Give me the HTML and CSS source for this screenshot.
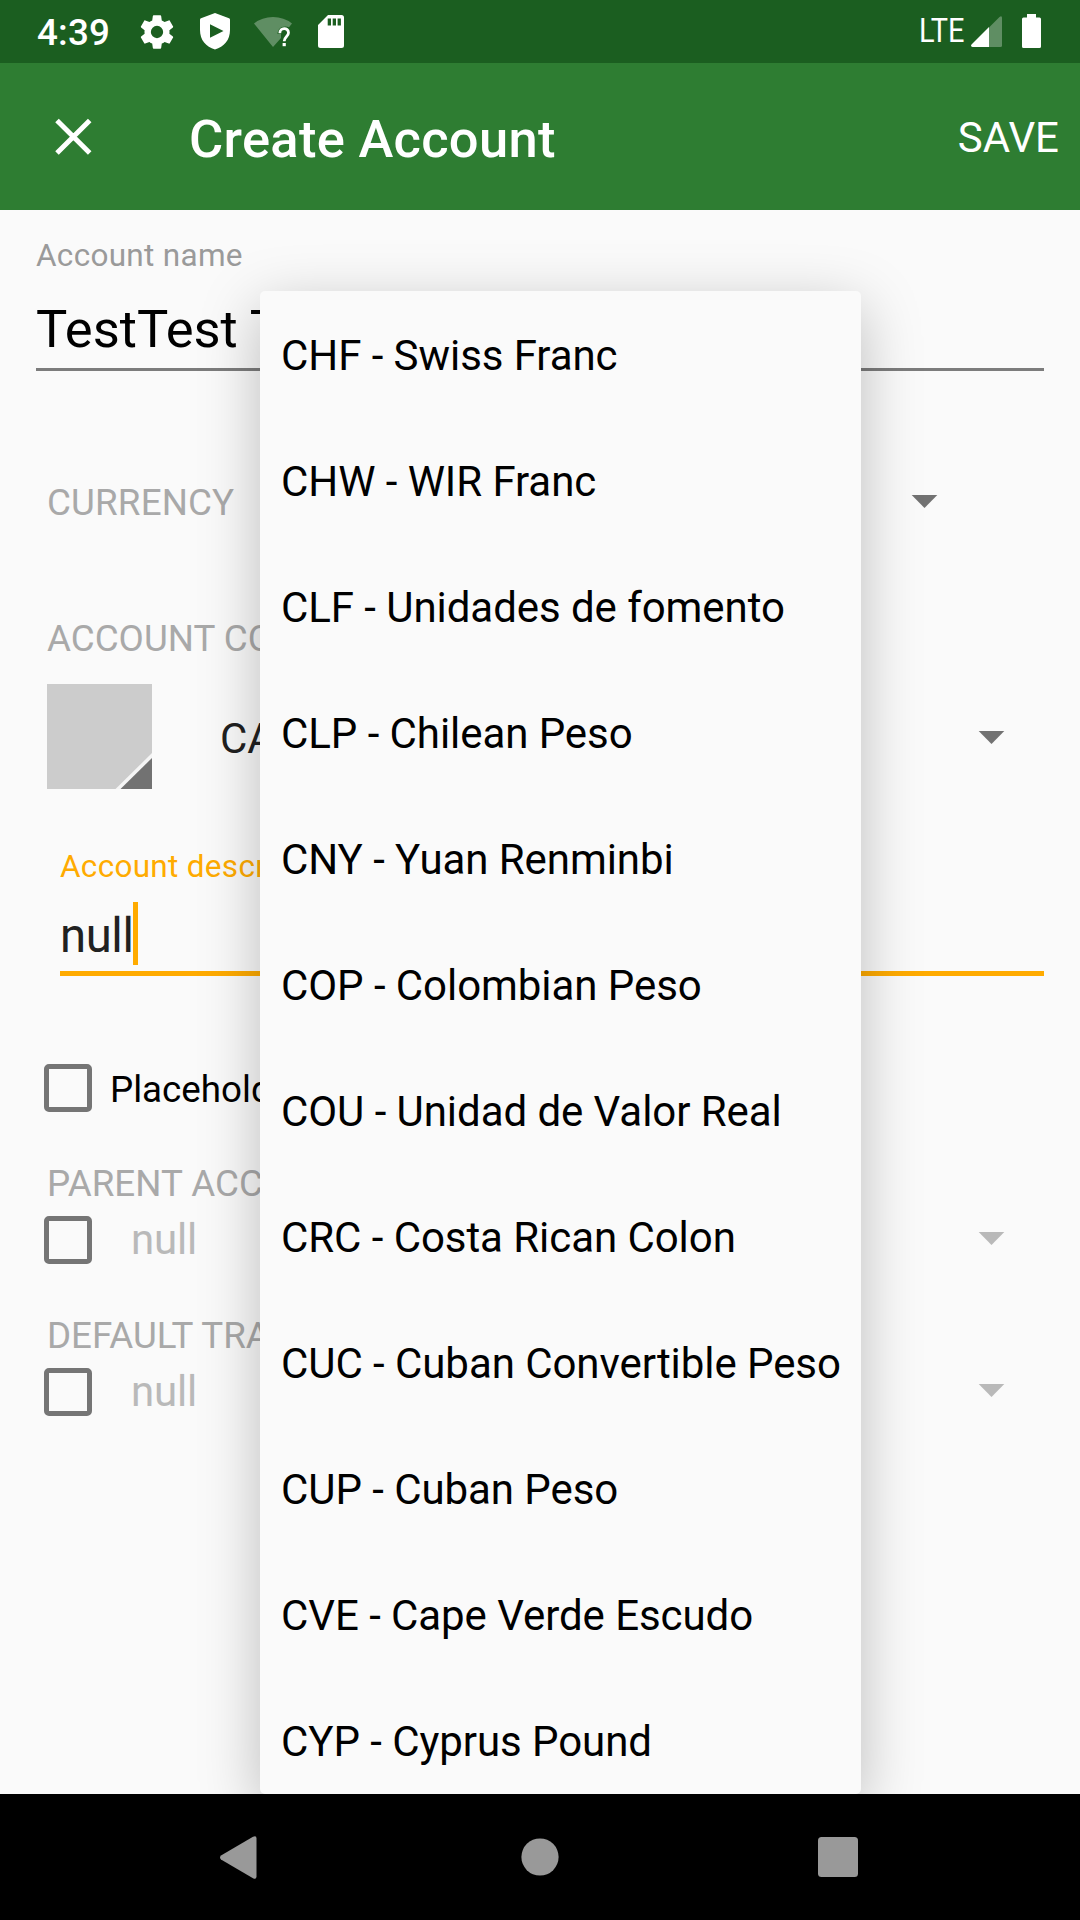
FILE: index.html
```html
<!DOCTYPE html>
<html lang="en">
<head>
<meta charset="utf-8">
<title>Create Account</title>
<link rel="stylesheet" href="styles.css">
</head>
<body>
<div class="screen">
  <header class="status">
    <span class="clock">4:39</span>
    <svg class="s-gear" width="40" height="40" viewBox="0 0 24 24"><path fill="#fff" d="M19.43 12.98c.04-.32.07-.64.07-.98s-.03-.66-.07-.98l2.11-1.65c.19-.15.24-.42.12-.64l-2-3.46c-.12-.22-.39-.3-.61-.22l-2.49 1c-.52-.4-1.08-.73-1.69-.98l-.38-2.65C14.46 2.18 14.25 2 14 2h-4c-.25 0-.46.18-.49.42l-.38 2.65c-.61.25-1.17.59-1.69.98l-2.49-1c-.23-.09-.49 0-.61.22l-2 3.46c-.13.22-.07.49.12.64l2.11 1.65c-.04.32-.07.65-.07.98s.03.66.07.98l-2.11 1.65c-.19.15-.24.42-.12.64l2 3.46c.12.22.39.3.61.22l2.49-1c.52.4 1.08.73 1.69.98l.38 2.65c.03.24.24.42.49.42h4c.25 0 .46-.18.49-.42l.38-2.65c.61-.25 1.17-.59 1.69-.98l2.49 1c.23.09.49 0 .61-.22l2-3.46c.12-.22.07-.49-.12-.64l-2.110-1.650zM12 15.700a3.700 3.700 0 1 1 0-7.400 3.700 3.700 0 0 1 0 7.400z"/></svg>
    <svg class="s-shield" width="30" height="37" viewBox="0 0 30 37"><path fill="#fff" fill-rule="evenodd" d="M15 0 29 5.2Q30 5.6 30 6.8V17C30 27 24 34 15 36.5 6 34 0 27 0 17V6.800Q0 5.600 1 5.200ZM10 11.300V24.700L23.500 18Z"/></svg>
    <svg class="s-wifi" width="38" height="32" viewBox="0 0 38 32"><path fill="#fff" fill-opacity=".3" d="M0 7.500Q8 1 19 1T38 7.500L35 11.200Q32 9.800 28 11 24 12.500 23.500 18H27V22L19 31Z"/><path fill="none" stroke="#fff" stroke-width="2.800" d="M25.800 17.200C25.800 11.200 34.500 11.200 34.500 16.800 34.500 20.500 30.200 20.500 30.200 25.300"/><path fill="#fff" d="M28.600 27h3.200v3.200h-3.200z"/></svg>
    <svg class="s-sd" width="26" height="33" viewBox="0 0 26 33"><path fill="#fff" fill-rule="evenodd" d="M10 0H23.500Q26 0 26 2.500V30.500Q26 33 23.500 33H2.500Q0 33 0 30.500V10ZM9.700 3.500V10.500H13V3.500ZM14.700 3.500V10.500H18V3.500ZM19.600 3.500V10.500H22.900V3.500Z"/></svg>
    <span class="lte">LTE</span>
    <svg class="s-signal" width="31" height="31" viewBox="0 0 31 31"><path fill="#fff" fill-opacity=".3" d="M18 11.500 28.500 1Q31 -.8 31 2V29.500Q31 31 29.500 31H18Z"/><path fill="#fff" d="M18 11V31H1.500Q-.8 30.500.5 28.500Z"/></svg>
    <svg class="s-battery" width="19" height="34" viewBox="0 0 19 34"><path fill="#fff" d="M5 0H14V3.500H17.500Q19 3.500 19 5V32.500Q19 34 17.500 34H1.500Q0 34 0 32.500V5Q0 3.500 1.500 3.500H5Z"/></svg>
  </header>

  <nav class="appbar">
    <svg class="close" width="38" height="38" viewBox="0 0 38 38"><path stroke="#fff" stroke-width="5" d="M3 2.500 35.700 35M35.700 2.500 3 35"/></svg>
    <h1 class="title">Create Account</h1>
    <span class="save">SAVE</span>
  </nav>

  <main class="form">
    <div class="name-label">Account name</div>
    <div class="name-field">TestTest Test</div>

    <div class="row currency">
      <span class="caption">CURRENCY</span>
      <svg class="caret" width="27" height="13" viewBox="0 0 27 13"><path d="M.7 0H26.300L13.500 13Z"/></svg>
    </div>

    <div class="caption color-caption">ACCOUNT COLOR &amp; TYPE</div>
    <div class="row type">
      <svg class="swatch" width="105" height="105" viewBox="0 0 105 105"><path fill="#ccc" d="M0 0H105V105H0Z"/><path fill="#f5f5f5" d="M105 69V105H68.500Z"/><path fill="#727272" d="M105 74V105H73.500Z"/></svg>
      <span class="type-name">CASH</span>
      <svg class="caret" width="27" height="13" viewBox="0 0 27 13"><path d="M.7 0H26.300L13.500 13Z"/></svg>
    </div>

    <div class="desc-label">Account description</div>
    <div class="desc-field"><span class="desc-text">null</span><span class="cursor"></span></div>

    <div class="row placeholder"><span class="box"></span><span class="check-text">Placeholder account</span></div>

    <div class="caption section">PARENT ACCOUNT</div>
    <div class="row disabled"><span class="box"></span><span class="value">null</span>
      <svg class="caret" width="27" height="13" viewBox="0 0 27 13"><path d="M.7 0H26.300L13.500 13Z"/></svg></div>

    <div class="caption section">DEFAULT TRANSFER ACCOUNT</div>
    <div class="row disabled"><span class="box"></span><span class="value">null</span>
      <svg class="caret" width="27" height="13" viewBox="0 0 27 13"><path d="M.7 0H26.300L13.500 13Z"/></svg></div>
  </main>

  <ul class="dropdown">
    <li>CHF - Swiss Franc</li>
    <li>CHW - WIR Franc</li>
    <li>CLF - Unidades de fomento</li>
    <li>CLP - Chilean Peso</li>
    <li>CNY - Yuan Renminbi</li>
    <li>COP - Colombian Peso</li>
    <li>COU - Unidad de Valor Real</li>
    <li>CRC - Costa Rican Colon</li>
    <li>CUC - Cuban Convertible Peso</li>
    <li>CUP - Cuban Peso</li>
    <li>CVE - Cape Verde Escudo</li>
    <li>CYP - Cyprus Pound</li>
  </ul>

  <footer class="navbar">
    <svg width="38" height="43" viewBox="0 0 38 43"><path fill="#999" d="M33 .7Q36.500-1 36.500 2.500V40.500Q36.500 44 33 42.300L1 23.500Q-1 21.500 1 19.500Z"/></svg>
    <svg class="home" width="38" height="38" viewBox="0 0 38 38"><circle cx="19" cy="19" r="18.600" fill="#999"/></svg>
    <svg width="40" height="40" viewBox="0 0 40 40"><rect width="40" height="40" rx="3.500" fill="#999"/></svg>
  </footer>
</div>
</body>
</html>
```
FILE: styles.css
```css
* { box-sizing: border-box; }

body {
  margin: 0;
  font-family: Roboto, sans-serif;
  color: #000;
}

svg { display: block; flex: none; }

.screen {
  position: relative;
  display: flex;
  flex-direction: column;
  width: 1080px;
  height: 1920px;
  background: #fafafa;
  overflow: hidden;
}

/* Status bar */
.status {
  display: flex;
  align-items: flex-start;
  height: 63px;
  padding-left: 37px;
  background: #1b5e20;
  color: #fff;
  white-space: nowrap;
}
.clock { width: 100px; font-size: 36.75px; font-weight: 500; line-height: 66px; letter-spacing: .2px; }
.s-gear { margin-top: 12px; }
.s-shield { margin: 13px 0 0 23px; }
.s-wifi { margin: 16px 0 0 24px; }
.s-sd { margin: 15px 0 0 26px; }
.lte {
  width: 50px;
  margin-left: auto;
  font-size: 32.5px;
  line-height: 62px;
  transform: scaleX(.89);
  transform-origin: 0 50%;
}
.s-signal { margin: 16px 0 0 2px; }
.s-battery { margin: 14px 39px 0 20px; }

/* App bar */
.appbar {
  display: flex;
  align-items: center;
  height: 147px;
  padding: 0 21px 0 54px;
  background: #2e7d32;
  color: #fff;
}
.title { margin: 4px 0 0 97px; font-size: 52.5px; font-weight: 500; letter-spacing: .28px; }
.save { margin: 1px 0 0 auto; font-size: 42px; }

/* Form */
.form { flex: 1; padding: 0 36px; white-space: nowrap; }
.row { display: flex; align-items: center; }
.caret { margin-left: auto; fill: #727272; }
.caption { padding-left: 11px; font-size: 36.75px; color: #a9a9a9; }

.name-label { height: 90px; font-size: 31.5px; line-height: 92px; letter-spacing: .3px; color: #9a9a9a; }
.name-field {
  height: 71px;
  border-bottom: 3px solid #7c7c7c;
  font-size: 52.5px;
  line-height: 58px;
}

.currency { height: 204px; margin-top: 29px; padding-right: 106px; }
.currency .caption { line-height: 204px; padding-top: 2px; letter-spacing: .15px; }
.currency .caret { margin-top: -1px; }
.color-caption { line-height: 69px; }

.type { height: 105px; margin-top: 11px; padding: 0 39px 0 11px; }
.type-name { margin: 4px 0 0 68px; font-size: 42px; color: #212121; }
.type .caret { margin-top: 2px; }

.desc-label { height: 60px; margin: 47px 0 0 24px; font-size: 31.5px; line-height: 62px; letter-spacing: .3px; color: #ffab00; }
.desc-field {
  display: flex;
  height: 80px;
  margin-left: 24px;
  border-bottom: 5px solid #ffab00;
  font-size: 47.25px;
  line-height: 81px;
  color: #212121;
}
.desc-text { width: 73px; letter-spacing: -.4px; }
.cursor { width: 5px; height: 63px; margin-top: 6px; background: #ffab00; }

.box { width: 48px; height: 48px; border: 5px solid #757575; border-radius: 5px; }
.placeholder { height: 48px; margin-top: 88px; padding-left: 8px; }
.check-text { margin: 3px 0 0 18px; font-size: 36.75px; }

.section { height: 60px; margin-top: 41px; line-height: 62px; }
.disabled { height: 48px; margin-top: 3px; padding: 0 39px 0 8px; }
.value { margin: -2px 0 0 39px; font-size: 42px; letter-spacing: -.2px; color: #b9b9b9; }
.disabled .caret { margin-top: -3px; fill: #b9b9b9; }

/* Currency list, floating above the form */
.dropdown {
  position: absolute;
  left: 260px;
  top: 291px;
  width: 601px;
  height: 1503px;
  margin: 0;
  padding: 2px 0 0;
  border-radius: 5px;
  background: #fafafa;
  box-shadow: 0 16px 60px rgba(0, 0, 0, .25);
  list-style: none;
}
.dropdown li {
  height: 126px;
  padding-left: 21px;
  font-size: 42px;
  line-height: 126px;
  letter-spacing: -.06px;
  white-space: nowrap;
}

/* System navigation */
.navbar {
  position: relative;
  display: flex;
  align-items: center;
  justify-content: space-between;
  height: 126px;
  padding: 0 222px 0 220px;
  background: #000;
}
.home { margin: -1px 0 0 3px; }
```
